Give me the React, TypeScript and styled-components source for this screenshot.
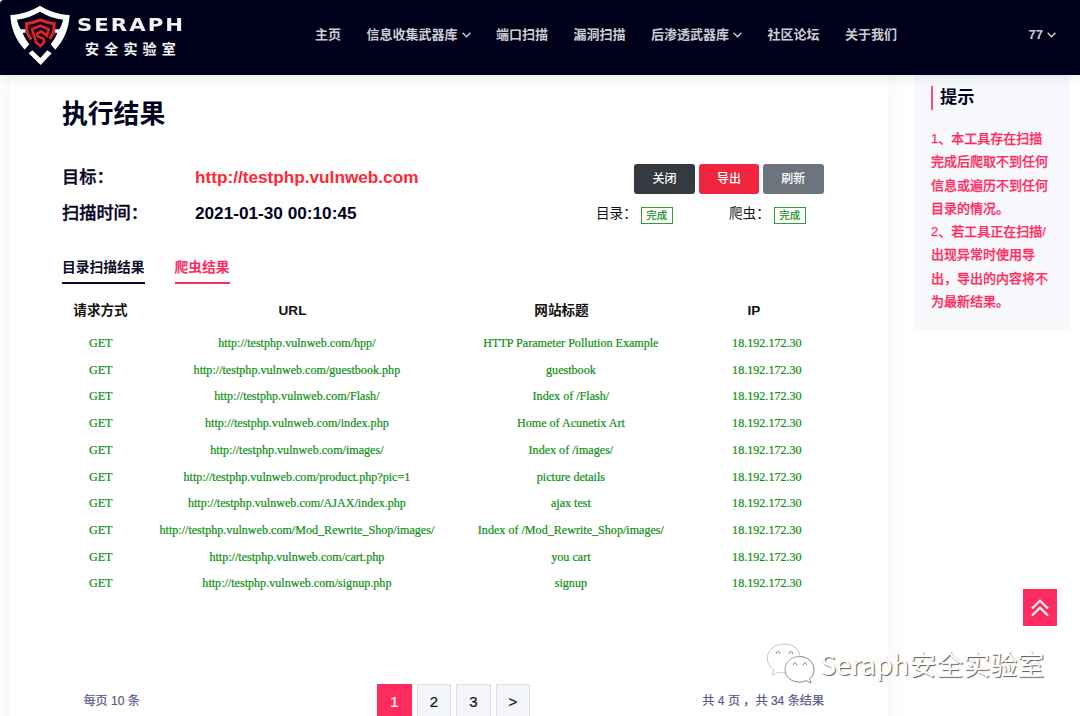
import React from "react";
import styled, { createGlobalStyle } from "styled-components";

const sans = `"Liberation Sans", "Noto Sans CJK SC", sans-serif`;

const GlobalStyle = createGlobalStyle`
  * { box-sizing: border-box; }
  html, body { margin: 0; padding: 0; height: 716px; overflow: hidden; background: #fff; }
  body { font-family: ${sans}; color: #02021e; }
`;

const Page = styled.div`
  position: relative;
  width: 1080px;
  height: 716px;
  overflow: hidden;
  display: flex;
  flex-direction: column;
`;

const Header = styled.header`
  flex: none;
  z-index: 2;
  height: 75px;
  display: flex;
  align-items: flex-start;
  background: #00001b;
  border-top-left-radius: 4px;
  box-shadow: 0 0 16px rgba(0, 0, 0, 0.12);
`;

const Brand = styled.div`
  display: flex;
  width: 315px;
  padding: 5px 0 0 10px;
`;

const BrandText = styled.div`
  display: flex;
  flex-direction: column;
  padding: 11px 0 0 7px;
  color: #f4f4f6;
`;

const BrandName = styled.span`
  font: 700 17px/18px "DejaVu Sans", sans-serif;
  letter-spacing: 1.6px;
  transform: scaleX(1.25);
  transform-origin: 0 50%;
`;

const BrandSub = styled.span`
  padding: 5px 0 0 8px;
  font: 700 14px/18px "Noto Sans CJK SC", sans-serif;
  letter-spacing: 5.2px;
`;

const Nav = styled.nav`
  display: flex;
  flex: 1;
  gap: 25.5px;
  padding-top: 25px;
`;

const NavItem = styled.a<{ $end?: boolean }>`
  display: flex;
  align-items: center;
  gap: 4px;
  height: 20px;
  font-size: 13px;
  font-weight: 700;
  line-height: 20px;
  white-space: nowrap;
  color: #ccccd1;
  margin-left: ${(p) => (p.$end ? "auto" : "0")};
  margin-right: ${(p) => (p.$end ? "24px" : "0")};
`;

const Body = styled.div`
  display: flex;
  flex: 1;
  align-items: flex-start;
  padding-left: 10px;
`;

const Main = styled.main`
  display: flex;
  flex-direction: column;
  width: 878px;
  height: 680px;
  padding: 20px 52px 0;
  background: #fff;
  box-shadow: 0 0 25px rgba(0, 0, 0, 0.06);
`;

const Title = styled.h1`
  margin: 0;
  font-size: 25.8px;
  line-height: 38px;
  font-weight: 700;
`;

const Summary = styled.section`
  display: flex;
  justify-content: space-between;
  margin-top: 26px;
`;

const Facts = styled.dl`
  display: grid;
  grid-template-columns: 133px auto;
  grid-auto-rows: 36px;
  margin: 0;
  font-size: 17.2px;
  line-height: 36px;
  font-weight: 700;
`;

const Term = styled.dt`
  font-weight: 500;
  -webkit-text-stroke: 0.35px currentColor;
`;

const Value = styled.dd<{ $hot?: boolean }>`
  margin: 0;
  color: ${(p) => (p.$hot ? "#fc2a33" : "inherit")};
`;

const Side = styled.div`
  display: flex;
  flex-direction: column;
  width: 240px;
`;

const Actions = styled.div`
  display: flex;
  justify-content: flex-end;
  gap: 4px;
  padding: 5px 12.5px 0 0;
`;

const Action = styled.button<{ $bg: string }>`
  width: 60.4px;
  height: 30px;
  padding: 0;
  border: 0;
  border-radius: 3px;
  background: ${(p) => p.$bg};
  color: #fff;
  font: 500 12px/28px ${sans};
`;

const States = styled.div`
  display: grid;
  grid-template-columns: 133px auto;
  margin-top: 10px;
`;

const State = styled.div`
  display: flex;
  align-items: center;
  gap: 4px;
  color: #111;
  font-size: 13.6px;
  line-height: 20px;
`;

const Badge = styled.span`
  width: 32px;
  height: 17px;
  margin-top: 2px;
  border: 1px solid #2f9e2f;
  color: #078a07;
  font-size: 10.5px;
  line-height: 15px;
  text-align: center;
  -webkit-text-stroke: 0.15px currentColor;
`;

const Tabs = styled.div`
  display: flex;
  gap: 30px;
  margin-top: 23px;
`;

const Tab = styled.a<{ $hot?: boolean }>`
  height: 30px;
  border-bottom: 2px solid currentColor;
  color: ${(p) => (p.$hot ? "#fd2d62" : "#0d0d2b")};
  font-size: 13.75px;
  font-weight: 700;
  line-height: 27px;
`;

const HeadRow = styled.div`
  display: grid;
  grid-template-columns: 77px 307px 231px 154px;
  margin-top: 16px;
  color: #111;
  font-size: 13.6px;
  font-weight: 700;
  line-height: 22px;
  text-align: center;
`;

const Rows = styled.div`
  display: grid;
  grid-auto-rows: 26.7px;
  margin-top: 8.1px;
`;

const Row = styled.div`
  display: grid;
  grid-template-columns: 77.4px 315px 233px 159px;
  color: #0a8f0f;
  font: 12.1px/26.7px "Liberation Serif", serif;
  text-align: center;
  white-space: nowrap;
  -webkit-text-stroke: 0.2px currentColor;
`;

const Footer = styled.footer`
  display: flex;
  align-items: flex-start;
  justify-content: space-between;
  margin-top: 87px;
  padding: 0 12px 0 21.5px;
  color: #55588c;
  font-size: 12.1px;
  line-height: 34px;
  -webkit-text-stroke: 0.2px currentColor;
`;

const Pager = styled.div`
  display: flex;
  gap: 5px;
  margin-left: 65px;
`;

const PageBtn = styled.a<{ $on?: boolean }>`
  width: 34.5px;
  height: 36px;
  border: 1px solid ${(p) => (p.$on ? "#ff2a5d" : "#dfdfe3")};
  background: ${(p) => (p.$on ? "#ff2a5d" : "#f4f5fa")};
  color: ${(p) => (p.$on ? "#fff" : "#10102c")};
  font-size: 15px;
  line-height: 33px;
  text-align: center;
`;

const Tips = styled.aside`
  width: 155px;
  height: 255px;
  margin-left: 26px;
  padding: 11px 17px 0;
  background: #f8f9fc;
`;

const TipsTitle = styled.h2`
  margin: 0 0 17px;
  padding: 0 0 2px 7px;
  border-left: 2px solid #fd4f7b;
  font-size: 17.2px;
  line-height: 22px;
`;

const TipsText = styled.p`
  margin: 0;
  color: #fd2d62;
  font-size: 13px;
  font-weight: 500;
  line-height: 23.25px;
  white-space: nowrap;
  -webkit-text-stroke: 0.25px currentColor;
`;

const ToTop = styled.a`
  position: absolute;
  left: 1022.5px;
  top: 589px;
  width: 34.5px;
  height: 37px;
  display: flex;
  align-items: center;
  justify-content: center;
  background: #ff2a5d;
`;

const Watermark = styled.div`
  position: absolute;
  left: 766px;
  top: 642px;
  display: flex;
  align-items: center;
  gap: 4px;
  color: #fff;
  font: 400 27px/44px "Noto Sans CJK SC", sans-serif;
  white-space: nowrap;
  text-shadow: 1px 1px 1px rgba(0, 0, 0, 0.65);
`;

const WechatSvg = styled.svg`
  filter: drop-shadow(0.6px 0.6px 0.5px rgba(0, 0, 0, 0.5));
`;

const Logo = () => (
  <svg width="60" height="60" viewBox="30 15 180 180" fill="none">
    <path fill="#fff" d="M120 17C148 34 176 43 209 45C206 90 191 121 166 149L152 133C161 121 168 110 172 98H163V88H178C184 77 188 66 189 59C161 55 138 46 120 35C102 46 79 55 51 59C52 66 56 77 62 88H77V98H68C72 110 79 121 88 133L74 149C49 121 33 90 31 45C63 43 92 34 120 17Z" />
    <path fill="#fff" d="M97 151L121 174L142 151L155 160L122 195L86 160Z" />
    <path stroke="#e12029" strokeWidth="9" d="M94 119L82 100L79 71C94 69 109 65 121 60C133 65 148 69 163 71L160 98L149 117" />
    <path stroke="#e12029" strokeWidth="8" d="M107 121L96 88L121 77L146 88L141 107L123 94L111 101L113 109L131 117L132 128L121 138L104 123" />
  </svg>
);

const Chevron = () => (
  <svg width="9" height="6" viewBox="0 0 9 6" fill="none" stroke="currentColor" strokeWidth="1.4">
    <path d="M0.6 0.8L4.5 4.7L8.4 0.8" />
  </svg>
);

const WechatIcon = () => (
  <WechatSvg width="50" height="44" viewBox="0 0 50 44">
    <g fill="#fff" stroke="#ccc" strokeWidth="0.5">
      <path d="M18 2C8.600 2 1.500 8.500 1.500 16C1.500 21 4 25 8 28L6 33L12.500 30C16 31 19 31 21 30.500L34 13C32 6 26 2 18 2Z" />
      <path stroke="#888" strokeWidth="0.8" d="M33.500 14.500C25.500 14.500 19 20.500 19 27.500C19 34.500 25.500 40 33.500 40C36 40 38 39.500 40 38.500L45 41L43.500 36.500C46.500 34.500 48 31 48 27.500C48 20.500 41.500 14.500 33.500 14.500Z" />
    </g>
    <g fill="#fff" stroke="#777" strokeWidth="1">
      <path d="M10.300 12A1.800 1.800 0 1 1 13.700 12M23.300 12A1.800 1.800 0 1 1 26.700 12M27.500 23.200A1.600 1.600 0 1 1 30.500 23.200M37.500 23.200A1.600 1.600 0 1 1 40.500 23.200" />
    </g>
  </WechatSvg>
);

const nav = [
  { label: "主页" },
  { label: "信息收集武器库", menu: true },
  { label: "端口扫描" },
  { label: "漏洞扫描" },
  { label: "后渗透武器库", menu: true },
  { label: "社区论坛" },
  { label: "关于我们" },
];

const host = "http://testphp.vulnweb.com";
const results = [
  ["/hpp/", "HTTP Parameter Pollution Example"],
  ["/guestbook.php", "guestbook"],
  ["/Flash/", "Index of /Flash/"],
  ["/index.php", "Home of Acunetix Art"],
  ["/images/", "Index of /images/"],
  ["/product.php?pic=1", "picture details"],
  ["/AJAX/index.php", "ajax test"],
  ["/Mod_Rewrite_Shop/images/", "Index of /Mod_Rewrite_Shop/images/"],
  ["/cart.php", "you cart"],
  ["/signup.php", "signup"],
];

const tips = [
  "1、本工具存在扫描", "完成后爬取不到任何", "信息或遍历不到任何", "目录的情况。",
  "2、若工具正在扫描/", "出现异常时使用导", "出，导出的内容将不", "为最新结果。",
];

export default function App() {
  return (
    <Page>
      <GlobalStyle />
      <Header>
        <Brand>
          <Logo />
          <BrandText>
            <BrandName>SERAPH</BrandName>
            <BrandSub>安全实验室</BrandSub>
          </BrandText>
        </Brand>
        <Nav>
          {nav.map((n) => (
            <NavItem key={n.label}>{n.label}{n.menu && <Chevron />}</NavItem>
          ))}
          <NavItem $end>77<Chevron /></NavItem>
        </Nav>
      </Header>
      <Body>
        <Main>
          <Title>执行结果</Title>
          <Summary>
            <Facts>
              <Term>目标：</Term><Value $hot>{host}</Value>
              <Term>扫描时间：</Term><Value>2021-01-30 00:10:45</Value>
            </Facts>
            <Side>
              <Actions>
                <Action $bg="#343a40">关闭</Action>
                <Action $bg="#f0263f">导出</Action>
                <Action $bg="#6c757d">刷新</Action>
              </Actions>
              <States>
                <State>目录：<Badge>完成</Badge></State>
                <State>爬虫：<Badge>完成</Badge></State>
              </States>
            </Side>
          </Summary>
          <Tabs>
            <Tab>目录扫描结果</Tab>
            <Tab $hot>爬虫结果</Tab>
          </Tabs>
          <HeadRow>
            <span>请求方式</span><span>URL</span><span>网站标题</span><span>IP</span>
          </HeadRow>
          <Rows>
            {results.map(([path, title]) => (
              <Row key={path}>
                <span>GET</span><span>{host + path}</span><span>{title}</span><span>18.192.172.30</span>
              </Row>
            ))}
          </Rows>
          <Footer>
            <span>每页 10 条</span>
            <Pager>
              <PageBtn $on>1</PageBtn><PageBtn>2</PageBtn><PageBtn>3</PageBtn><PageBtn>&gt;</PageBtn>
            </Pager>
            <span>共 4 页 ，共 34 条结果</span>
          </Footer>
        </Main>
        <Tips>
          <TipsTitle>提示</TipsTitle>
          <TipsText>{tips.map((t) => <React.Fragment key={t}>{t}<br /></React.Fragment>)}</TipsText>
        </Tips>
      </Body>
      <ToTop>
        <svg width="18" height="18" viewBox="0 0 18 18" fill="none" stroke="#fff" strokeWidth="2.200">
          <path d="M1 9.500L9 1.800L17 9.500M1 16.500L9 8.800L17 16.500" />
        </svg>
      </ToTop>
      <Watermark><WechatIcon />Seraph安全实验室</Watermark>
    </Page>
  );
}
